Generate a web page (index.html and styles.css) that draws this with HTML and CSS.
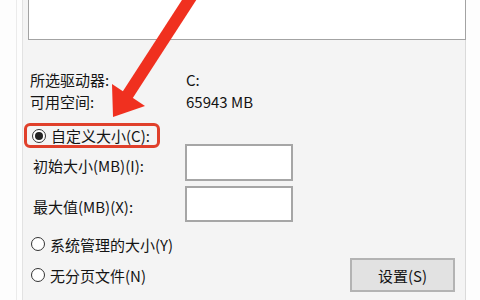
FILE: index.html
```html
<!DOCTYPE html>
<html lang="zh-CN">
<head>
<meta charset="UTF-8">
<title>虚拟内存</title>
<link rel="stylesheet" href="styles.css">
</head>
<body>
<div class="dialog">
    <div class="panel">
        <div class="drive-list"></div>
        <div class="info">
            <span>所选驱动器:</span><span>C:</span>
            <span>可用空间:</span><span>65943 MB</span>
        </div>
        <div class="custom-row">
            <span class="radio checked"></span>
            <span>自定义大小(C):</span>
        </div>
        <div class="sizes">
            <span class="size-label">初始大小(MB)(I):</span><div class="size-box"></div>
            <span class="size-label">最大值(MB)(X):</span><div class="size-box"></div>
        </div>
        <div class="option">
            <span class="radio"></span>
            <span>系统管理的大小(Y)</span>
        </div>
        <div class="option last">
            <div class="option-inner">
                <span class="radio"></span>
                <span>无分页文件(N)</span>
            </div>
            <button class="set-btn">设置(S)</button>
        </div>
    </div>
</div>
<svg class="arrow" width="480" height="300" viewBox="0 0 480 300">
    <line x1="193" y1="-6" x2="125" y2="99" stroke="#f0301f" stroke-width="12"/>
    <polygon points="113,117 112,84 145,106" fill="#f0301f"/>
</svg>
</body>
</html>
```

FILE: styles.css
```css
body {
    margin: 0;
    background-color: #fdfdfd;
    font-family: "Noto Sans CJK SC", "Noto Sans", sans-serif;
    font-size: 15px;
    color: #141414;
    position: relative;
    height: 300px;
    overflow: hidden;
}
.dialog {
    margin-left: 16px;
    padding-left: 5px;
    border-left: 1px solid #ebebeb;
    height: 300px;
}
.panel {
    box-sizing: border-box;
    width: 444px;
    height: 300px;
    background-color: #f4f4f4;
    border-left: 1px solid #e2e2e2;
    border-right: 1px solid #dadada;
}
.drive-list {
    box-sizing: border-box;
    width: 438px;
    height: 40px;
    margin-left: 5px;
    background-color: #ffffff;
    border: 1px solid #a3a3a3;
    border-top: none;
}
.info {
    display: grid;
    grid-template-columns: 156px auto;
    grid-auto-rows: 22px;
    line-height: 22px;
    margin-top: 29px;
    margin-left: 7px;
}
.custom-row {
    box-sizing: border-box;
    display: inline-flex;
    align-items: center;
    gap: 5px;
    width: 136px;
    height: 25px;
    margin-top: 10px;
    margin-left: 1px;
    padding-left: 5px;
    border: 3px solid #e0402b;
    border-radius: 6px;
    line-height: 19px;
}
.radio {
    box-sizing: border-box;
    width: 14px;
    height: 14px;
    border: 1px solid #333333;
    border-radius: 50%;
    background-color: #ffffff;
    display: flex;
    align-items: center;
    justify-content: center;
    flex-shrink: 0;
}
.radio.checked::after {
    content: "";
    width: 8px;
    height: 8px;
    border-radius: 50%;
    background-color: #222222;
}
.sizes {
    display: grid;
    grid-template-columns: 152px 108px;
    grid-template-rows: 37px 36px;
    row-gap: 5px;
    margin-top: -4px;
    margin-left: 10px;
}
.size-label {
    display: flex;
    align-items: center;
    padding-top: 5px;
}
.size-box {
    background-color: #ffffff;
    border: 2px solid #a6a6a6;
}
.option {
    display: flex;
    align-items: center;
    gap: 5px;
    height: 22px;
    margin-top: 11px;
    margin-left: 8px;
}
.option.last {
    justify-content: space-between;
    height: 34px;
    margin-top: 3px;
    margin-right: 10px;
}
.option-inner {
    display: flex;
    align-items: center;
    gap: 5px;
}
.set-btn {
    width: 105px;
    height: 34px;
    background-color: #e2e2e2;
    border: 2px solid #b3b3b3;
    font-family: inherit;
    font-size: 15px;
    color: #141414;
    padding: 0;
}
.arrow {
    position: absolute;
    top: 0;
    left: 0;
    pointer-events: none;
}
```
